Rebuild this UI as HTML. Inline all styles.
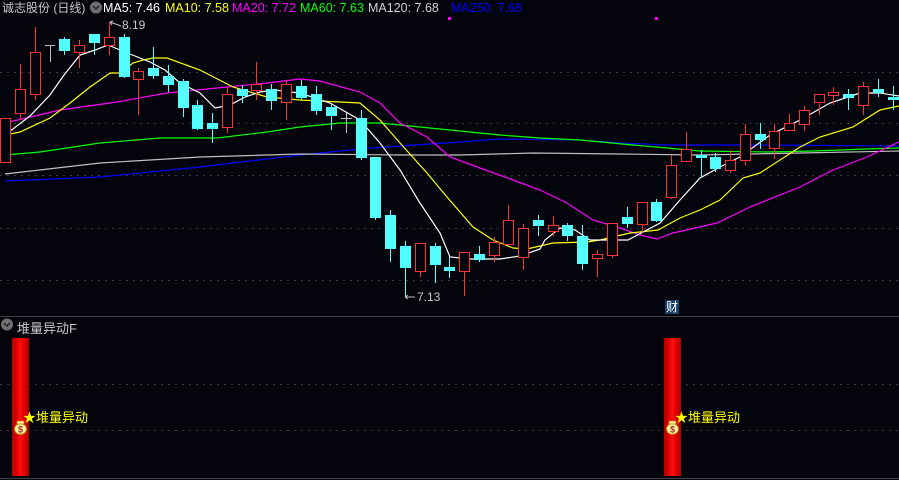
<!DOCTYPE html>
<html><head><meta charset="utf-8">
<style>
html,body{margin:0;padding:0;background:#04040c;}
body{width:899px;height:480px;overflow:hidden;position:relative;font-family:"Liberation Sans","Noto Sans CJK SC",sans-serif;}
.h{position:absolute;top:0;font-size:12.5px;line-height:16px;white-space:nowrap;}
.t{position:absolute;font-size:12px;white-space:nowrap;}
svg{position:absolute;left:0;top:0;}
</style></head><body>
<svg width="899" height="480" viewBox="0 0 899 480">
<g stroke="#3a3a44" stroke-width="1" stroke-dasharray="2 5">
<line x1="0" y1="72.5" x2="899" y2="72.5"/><line x1="0" y1="123.5" x2="899" y2="123.5"/>
<line x1="0" y1="175.5" x2="899" y2="175.5"/><line x1="0" y1="228.5" x2="899" y2="228.5"/>
<line x1="0" y1="280.5" x2="899" y2="280.5"/>
<line x1="0" y1="384.5" x2="899" y2="384.5"/><line x1="0" y1="430.5" x2="899" y2="430.5"/>
</g>
<line x1="0" y1="316.5" x2="899" y2="316.5" stroke="#404048"/>
<line x1="0" y1="478.5" x2="899" y2="478.5" stroke="#404048"/>
<g fill="none" stroke-width="1.2">
<polyline stroke="#0000ff" points="5,181 30,180 100,177 200,167 300,155 360,149 400,146 460,142 500,139 580,140 620,143 667,145 767,145 899,146"/>
<polyline stroke="#c0c0c0" points="5,174 100,163 200,157 300,154 400,155 460,155 533,153 620,154 700,155 800,153 899,151"/>
<polyline stroke="#00ff00" points="5,155 40,152 100,143 160,138 217,138 267,132 300,127 340,123 380,123 420,127 460,131 500,135 540,138 580,140 633,145 667,148 700,151 767,152 813,151 867,149 899,148"/>
<polyline stroke="#ff00ff" points="5,123 60,110 117,102 167,93 217,88 267,83 300,79 320,81 360,92 380,103 400,123 427,137 450,157 480,168 513,180 540,190 567,203 593,220 620,228 640,235 657,239 673,233 717,223 750,207 800,187 833,170 867,157 899,142"/>
<polyline stroke="#ffff00" points="5,135 20,132 50,118 70,103 90,87 110,73 120,73 133,63 143,60 153,58 167,58 200,70 233,87 267,97 300,100 360,103 380,120 400,143 427,173 447,197 473,227 493,240 513,248 527,249 553,243 587,242 600,240 630,233 658,230 680,218 700,210 720,200 743,178 760,173 800,147 820,137 853,127 880,110 899,106"/>
<polyline stroke="#ffffff" points="5,135 30,116 50,95 64,75 80,55 95,50 108,45 120,50 130,54 150,62 165,70 180,83 200,93 215,108 230,105 245,97 260,92 275,90 290,92 300,93 330,103 360,120 380,143 400,170 420,203 440,233 450,257 470,259 500,259 520,256 540,249 545,240 560,228 575,230 590,240 628,240 660,223 680,200 700,178 720,167 740,157 770,135 800,120 830,103 860,93 880,93 899,96"/>
</g>
<g stroke-width="1">
<g stroke="#ff3232" fill="#04040c">
<rect x="0.5" y="118.5" width="10" height="44"/>
<line x1="20.5" y1="64" x2="20.5" y2="120"/><rect x="15.5" y="89.5" width="10" height="24"/>
<line x1="35.5" y1="27" x2="35.5" y2="100"/><rect x="30.5" y="52.5" width="10" height="42"/>
<line x1="79.5" y1="40" x2="79.5" y2="68"/><rect x="74.5" y="45.5" width="10" height="7"/>
<line x1="109.5" y1="22" x2="109.5" y2="55"/><rect x="104.5" y="37.5" width="10" height="8"/>
<line x1="138.5" y1="68" x2="138.5" y2="115"/><rect x="133.5" y="71.5" width="10" height="8"/>
<line x1="227.5" y1="87" x2="227.5" y2="133"/><rect x="222.5" y="94.5" width="10" height="33"/>
<line x1="256.5" y1="62" x2="256.5" y2="100"/><rect x="251.5" y="84.5" width="10" height="6"/>
<line x1="286.5" y1="80" x2="286.5" y2="120"/><rect x="281.5" y="84.5" width="10" height="18"/>
<line x1="420.5" y1="243" x2="420.5" y2="277"/><rect x="415.5" y="243.5" width="10" height="28"/>
<line x1="464.5" y1="252" x2="464.5" y2="296"/><rect x="459.5" y="252.5" width="10" height="19"/>
<line x1="494.5" y1="237" x2="494.5" y2="262"/><rect x="489.5" y="242.5" width="10" height="13"/>
<line x1="508.5" y1="205" x2="508.5" y2="244"/><rect x="503.5" y="220.5" width="10" height="24"/>
<line x1="523.5" y1="224" x2="523.5" y2="270"/><rect x="518.5" y="228.5" width="10" height="29"/>
<line x1="553.5" y1="216" x2="553.5" y2="236"/><rect x="548.5" y="225.5" width="10" height="6"/>
<line x1="597.5" y1="250" x2="597.5" y2="277"/><rect x="592.5" y="254.5" width="10" height="4"/>
<line x1="612.5" y1="223" x2="612.5" y2="258"/><rect x="607.5" y="223.5" width="10" height="32"/>
<line x1="642.5" y1="202" x2="642.5" y2="233"/><rect x="637.5" y="202.5" width="10" height="22"/>
<line x1="671.5" y1="155" x2="671.5" y2="199"/><rect x="666.5" y="165.5" width="10" height="32"/>
<line x1="686.5" y1="132" x2="686.5" y2="162"/><rect x="681.5" y="149.5" width="10" height="12"/>
<line x1="730.5" y1="150" x2="730.5" y2="173"/><rect x="725.5" y="160.5" width="10" height="10"/>
<line x1="745.5" y1="124" x2="745.5" y2="165"/><rect x="740.5" y="134.5" width="10" height="26"/>
<line x1="774.5" y1="124" x2="774.5" y2="159"/><rect x="769.5" y="131.5" width="10" height="17"/>
<line x1="789.5" y1="114" x2="789.5" y2="131"/><rect x="784.5" y="123.5" width="10" height="7"/>
<line x1="804.5" y1="106" x2="804.5" y2="131"/><rect x="799.5" y="110.5" width="10" height="14"/>
<line x1="819.5" y1="94" x2="819.5" y2="115"/><rect x="814.5" y="94.5" width="10" height="8"/>
<line x1="833.5" y1="87" x2="833.5" y2="105"/><rect x="828.5" y="92.5" width="10" height="3"/>
<line x1="863.5" y1="82" x2="863.5" y2="115"/><rect x="858.5" y="86.5" width="10" height="19"/>
</g>
<g stroke="#54ffff" fill="#54ffff">
<line x1="64.5" y1="37" x2="64.5" y2="55"/><rect x="59.5" y="39.5" width="10" height="11"/>
<line x1="94.5" y1="34" x2="94.5" y2="55"/><rect x="89.5" y="34.5" width="10" height="8"/>
<line x1="124.5" y1="34" x2="124.5" y2="78"/><rect x="119.5" y="37.5" width="10" height="39"/>
<line x1="153.5" y1="47" x2="153.5" y2="79"/><rect x="148.5" y="68.5" width="10" height="7"/>
<line x1="168.5" y1="65" x2="168.5" y2="92"/><rect x="163.5" y="76.5" width="10" height="8"/>
<line x1="183.5" y1="79" x2="183.5" y2="117"/><rect x="178.5" y="81.5" width="10" height="26"/>
<line x1="197.5" y1="100" x2="197.5" y2="130"/><rect x="192.5" y="105.5" width="10" height="23"/>
<line x1="212.5" y1="113" x2="212.5" y2="143"/><rect x="207.5" y="123.5" width="10" height="5"/>
<line x1="242.5" y1="85" x2="242.5" y2="103"/><rect x="237.5" y="89.5" width="10" height="6"/>
<line x1="271.5" y1="84" x2="271.5" y2="110"/><rect x="266.5" y="89.5" width="10" height="11"/>
<line x1="301.5" y1="80" x2="301.5" y2="100"/><rect x="296.5" y="86.5" width="10" height="11"/>
<line x1="316.5" y1="86" x2="316.5" y2="115"/><rect x="311.5" y="94.5" width="10" height="16"/>
<line x1="331.5" y1="104" x2="331.5" y2="130"/><rect x="326.5" y="107.5" width="10" height="8"/>
<line x1="361.5" y1="110" x2="361.5" y2="160"/><rect x="356.5" y="118.5" width="10" height="39"/>
<line x1="375.5" y1="157" x2="375.5" y2="220"/><rect x="370.5" y="157.5" width="10" height="60"/>
<line x1="390.5" y1="210" x2="390.5" y2="262"/><rect x="385.5" y="215.5" width="10" height="33"/>
<line x1="405.5" y1="241" x2="405.5" y2="297"/><rect x="400.5" y="246.5" width="10" height="21"/>
<line x1="435.5" y1="243" x2="435.5" y2="283"/><rect x="430.5" y="246.5" width="10" height="18"/>
<line x1="449.5" y1="257" x2="449.5" y2="278"/><rect x="444.5" y="267.5" width="10" height="3"/>
<line x1="479.5" y1="246" x2="479.5" y2="262"/><rect x="474.5" y="254.5" width="10" height="5"/>
<line x1="538.5" y1="215" x2="538.5" y2="236"/><rect x="533.5" y="220.5" width="10" height="5"/>
<line x1="567.5" y1="223" x2="567.5" y2="241"/><rect x="562.5" y="225.5" width="10" height="10"/>
<line x1="582.5" y1="225" x2="582.5" y2="270"/><rect x="577.5" y="236.5" width="10" height="27"/>
<line x1="627.5" y1="207" x2="627.5" y2="228"/><rect x="622.5" y="217.5" width="10" height="6"/>
<line x1="656.5" y1="199" x2="656.5" y2="222"/><rect x="651.5" y="202.5" width="10" height="18"/>
<line x1="701.5" y1="150" x2="701.5" y2="178"/><rect x="696.5" y="155.5" width="10" height="2"/>
<line x1="715.5" y1="153" x2="715.5" y2="172"/><rect x="710.5" y="157.5" width="10" height="11"/>
<line x1="760.5" y1="123" x2="760.5" y2="149"/><rect x="755.5" y="134.5" width="10" height="5"/>
<line x1="848.5" y1="89" x2="848.5" y2="110"/><rect x="843.5" y="94.5" width="10" height="3"/>
<line x1="878.5" y1="79" x2="878.5" y2="97"/><rect x="873.5" y="89.5" width="10" height="3"/>
<line x1="893.5" y1="86" x2="893.5" y2="110"/><rect x="888.5" y="97.5" width="10" height="2"/>
</g>
<g stroke="#c0c0c0">
<line x1="45" y1="45.5" x2="55" y2="45.5"/><line x1="50.5" y1="45" x2="50.5" y2="62"/>
<line x1="341" y1="118.5" x2="352" y2="118.5"/><line x1="346.5" y1="113" x2="346.5" y2="133"/>
</g>
<g stroke="#c0c0c0" fill="none">
<path d="M110,22 L113,21 M110,22 L112,25 M110,22 L121,26"/>
<path d="M405,297 L408,295 M405,297 L408,299 M405,297 L415,297"/>
</g>
</g>
<rect x="448" y="17" width="3" height="3" fill="#ff00ff"/>
<rect x="655" y="17" width="3" height="3" fill="#ff00ff"/>
<defs>
<linearGradient id="rg" x1="0" x2="1" y1="0" y2="0">
<stop offset="0" stop-color="#b00000"/><stop offset="0.3" stop-color="#e00000"/><stop offset="0.5" stop-color="#ff1010"/><stop offset="0.7" stop-color="#e00000"/><stop offset="1" stop-color="#b00000"/>
</linearGradient>
</defs>
<rect x="12" y="338" width="17" height="138" fill="url(#rg)"/>
<rect x="664" y="338" width="17" height="138" fill="url(#rg)"/>
<g>
<ellipse cx="20.5" cy="429" rx="6" ry="5.5" fill="#fff3a0" stroke="#c08000"/>
<rect x="17" y="421" width="7" height="3" fill="#fff3a0" stroke="#c08000" stroke-width="0.8"/>
<text x="20.5" y="432.5" font-size="9" font-weight="bold" fill="#a03030" text-anchor="middle" font-family="Liberation Sans,sans-serif">$</text>
<ellipse cx="672.5" cy="429" rx="6" ry="5.5" fill="#fff3a0" stroke="#c08000"/>
<rect x="669" y="421" width="7" height="3" fill="#fff3a0" stroke="#c08000" stroke-width="0.8"/>
<text x="672.5" y="432.5" font-size="9" font-weight="bold" fill="#a03030" text-anchor="middle" font-family="Liberation Sans,sans-serif">$</text>
</g>
<circle cx="96" cy="7.5" r="6" fill="#707070"/><path d="M93,6 L96,9 L99,6" stroke="#202020" stroke-width="1.5" fill="none"/>
<circle cx="7" cy="324.5" r="6" fill="#707070"/><path d="M4,323 L7,326 L10,323" stroke="#202020" stroke-width="1.5" fill="none"/>
</svg>
<div class="h" style="left:2px;color:#c8c8c8;font-size:12px">诚志股份 (日线)</div>
<div class="h" style="left:103px;color:#fff">MA5: 7.46</div>
<div class="h" style="left:165px;color:#ffff00">MA10: 7.58</div>
<div class="h" style="left:232px;color:#ff00ff">MA20: 7.72</div>
<div class="h" style="left:300px;color:#00ff00">MA60: 7.63</div>
<div class="h" style="left:368px;color:#d0d0d0">MA120: 7.68</div>
<div class="h" style="left:451px;color:#0000ff">MA250: 7.68</div>
<div class="t" style="left:122px;top:18px;color:#c8c8c8">8.19</div>
<div class="t" style="left:417px;top:290px;color:#c8c8c8">7.13</div>
<div class="t" style="left:665px;top:300px;color:#fff;background:#1b3f66;font-size:12px;line-height:14px;padding:0 1px">财</div>
<div class="t" style="left:17px;top:318px;color:#c8c8c8;font-size:13px">堆量异动F</div>
<div class="t" style="left:23px;top:407px;color:#ffff00;font-size:13px">★堆量异动</div>
<div class="t" style="left:675px;top:407px;color:#ffff00;font-size:13px">★堆量异动</div>
</body></html>
